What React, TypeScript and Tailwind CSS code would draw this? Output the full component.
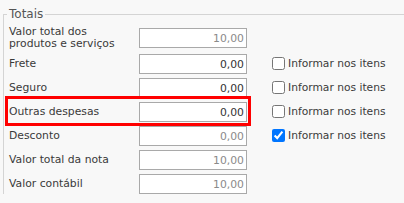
import React from 'react';

type Row = {
  label: string;
  value: string;
  readOnly?: boolean;
  check?: boolean;
  highlight?: boolean;
};

const rows: Row[] = [
  { label: 'Valor total dos produtos e serviços', value: '10,00', readOnly: true },
  { label: 'Frete', value: '0,00', check: false },
  { label: 'Seguro', value: '0,00', check: false },
  { label: 'Outras despesas', value: '0,00', check: false, highlight: true },
  { label: 'Desconto', value: '0,00', readOnly: true, check: true },
  { label: 'Valor total da nota', value: '10,00', readOnly: true },
  { label: 'Valor contábil', value: '10,00', readOnly: true },
];

export default function App() {
  return (
    <div className="w-[404px] h-[203px] overflow-hidden bg-[#f8f8f8] font-['DejaVu_Sans',sans-serif] text-[#3a3a3a]">
      <fieldset className="ml-[3px] mt-[7px] w-[420px] border-l border-t border-[#d4d4d4] pl-[5px] pt-[5px]">
        <legend className="-ml-[2px] px-[2px] text-[12px] leading-[14px] text-[#555]">Totais</legend>

        <div className="flex flex-col gap-[4px]">
          {rows.map((r) => (
            <div key={r.label} className="relative flex items-center">
              {/* red highlight around the row */}
              {r.highlight && (
                <span className="absolute -left-[4px] -top-[6px] -bottom-[4px] w-[246px] border-[3px] border-[#ff0000]" />
              )}
              <label className="w-[130px] pr-2 text-[10.8px] leading-[12px]">{r.label}</label>
              <input
                readOnly
                value={r.value}
                className={`h-[20px] w-[108px] border border-[#a9a9a9] bg-white pr-[2px] text-right text-[10.8px] outline-none ${
                  r.readOnly ? 'text-[#8a8a8a]' : 'text-[#333]'
                }`}
              />
              {r.check !== undefined && (
                <label className="ml-[25px] flex items-center gap-[3px] text-[10.7px]">
                  <input
                    type="checkbox"
                    defaultChecked={r.check}
                    className="h-[13px] w-[13px] accent-[#0075ff]"
                  />
                  Informar nos itens
                </label>
              )}
            </div>
          ))}
        </div>
      </fieldset>
    </div>
  );
}
